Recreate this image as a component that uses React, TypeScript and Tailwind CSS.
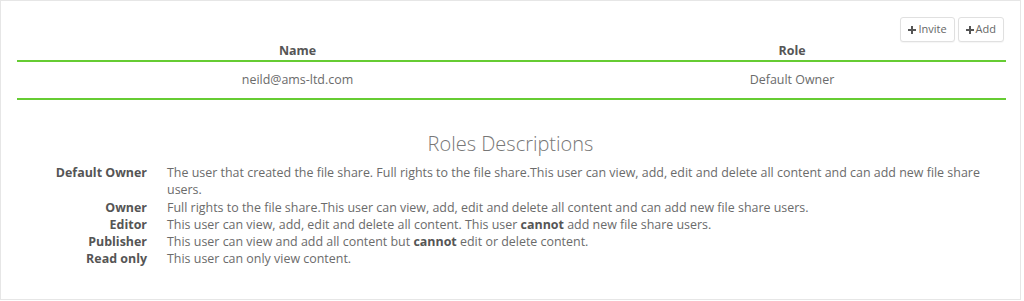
import React from 'react';

const Plus: React.FC = () => (
  <svg width="8" height="8" viewBox="0 0 8 8" className="mr-[2px]">
    <path d="M3 0h2v3h3v2H5v3H3V5H0V3h3z" fill="#555" />
  </svg>
);

const roles: { name: string; desc: React.ReactNode }[] = [
  {
    name: 'Default Owner',
    desc: 'The user that created the file share. Full rights to the file share.This user can view, add, edit and delete all content and can add new file share users.',
  },
  {
    name: 'Owner',
    desc: 'Full rights to the file share.This user can view, add, edit and delete all content and can add new file share users.',
  },
  {
    name: 'Editor',
    desc: (
      <>
        This user can view, add, edit and delete all content. This user <b className="font-bold text-[#555]">cannot</b> add new file share users.
      </>
    ),
  },
  {
    name: 'Publisher',
    desc: (
      <>
        This user can view and add all content but <b className="font-bold text-[#555]">cannot</b> edit or delete content.
      </>
    ),
  },
  { name: 'Read only', desc: 'This user can only view content.' },
];

const App: React.FC = () => {
  return (
    <div className="w-[1021px] h-[300px] border border-[#e6e6e6] bg-white px-[16px] font-['Open_Sans',sans-serif] text-[12.45px] text-[#6b6b6b]">
      <div className="flex justify-end gap-[3px] pt-[16px]">
        <button className="flex items-center h-[25px] px-[7px] border border-[#e0e0e0] rounded-[3px] shadow-[0_1px_1px_rgba(0,0,0,0.04)] text-[11px] text-[#666] bg-white">
          <Plus />Invite
        </button>
        <button className="flex items-center h-[25px] px-[7px] border border-[#e0e0e0] rounded-[3px] shadow-[0_1px_1px_rgba(0,0,0,0.04)] text-[11px] text-[#666] bg-white">
          <Plus />Add
        </button>
      </div>

      <div className="grid grid-cols-[561px_428px]">
        <div className="h-[20px] leading-[18px] text-center font-bold text-[#555] border-b-2 border-[#66cc33]">Name</div>
        <div className="h-[20px] leading-[18px] text-center font-bold text-[#555] border-b-2 border-[#66cc33]">Role</div>
        <div className="h-[38px] flex items-center justify-center border-b-2 border-[#66cc33]">neild@ams-ltd.com</div>
        <div className="h-[38px] flex items-center justify-center border-b-2 border-[#66cc33]">Default Owner</div>
      </div>

      <h3 className="mt-[32px] text-center text-[20px] leading-[24px] font-light text-[#777]">Roles Descriptions</h3>

      <div className="grid grid-cols-[130px_839px] gap-x-[20px] mt-[8px] leading-[17.25px]">
        {roles.map((r) => (
          <React.Fragment key={r.name}>
            <div className="text-right font-bold text-[#555]">{r.name}</div>
            <div>{r.desc}</div>
          </React.Fragment>
        ))}
      </div>
    </div>
  );
};

export default App;
